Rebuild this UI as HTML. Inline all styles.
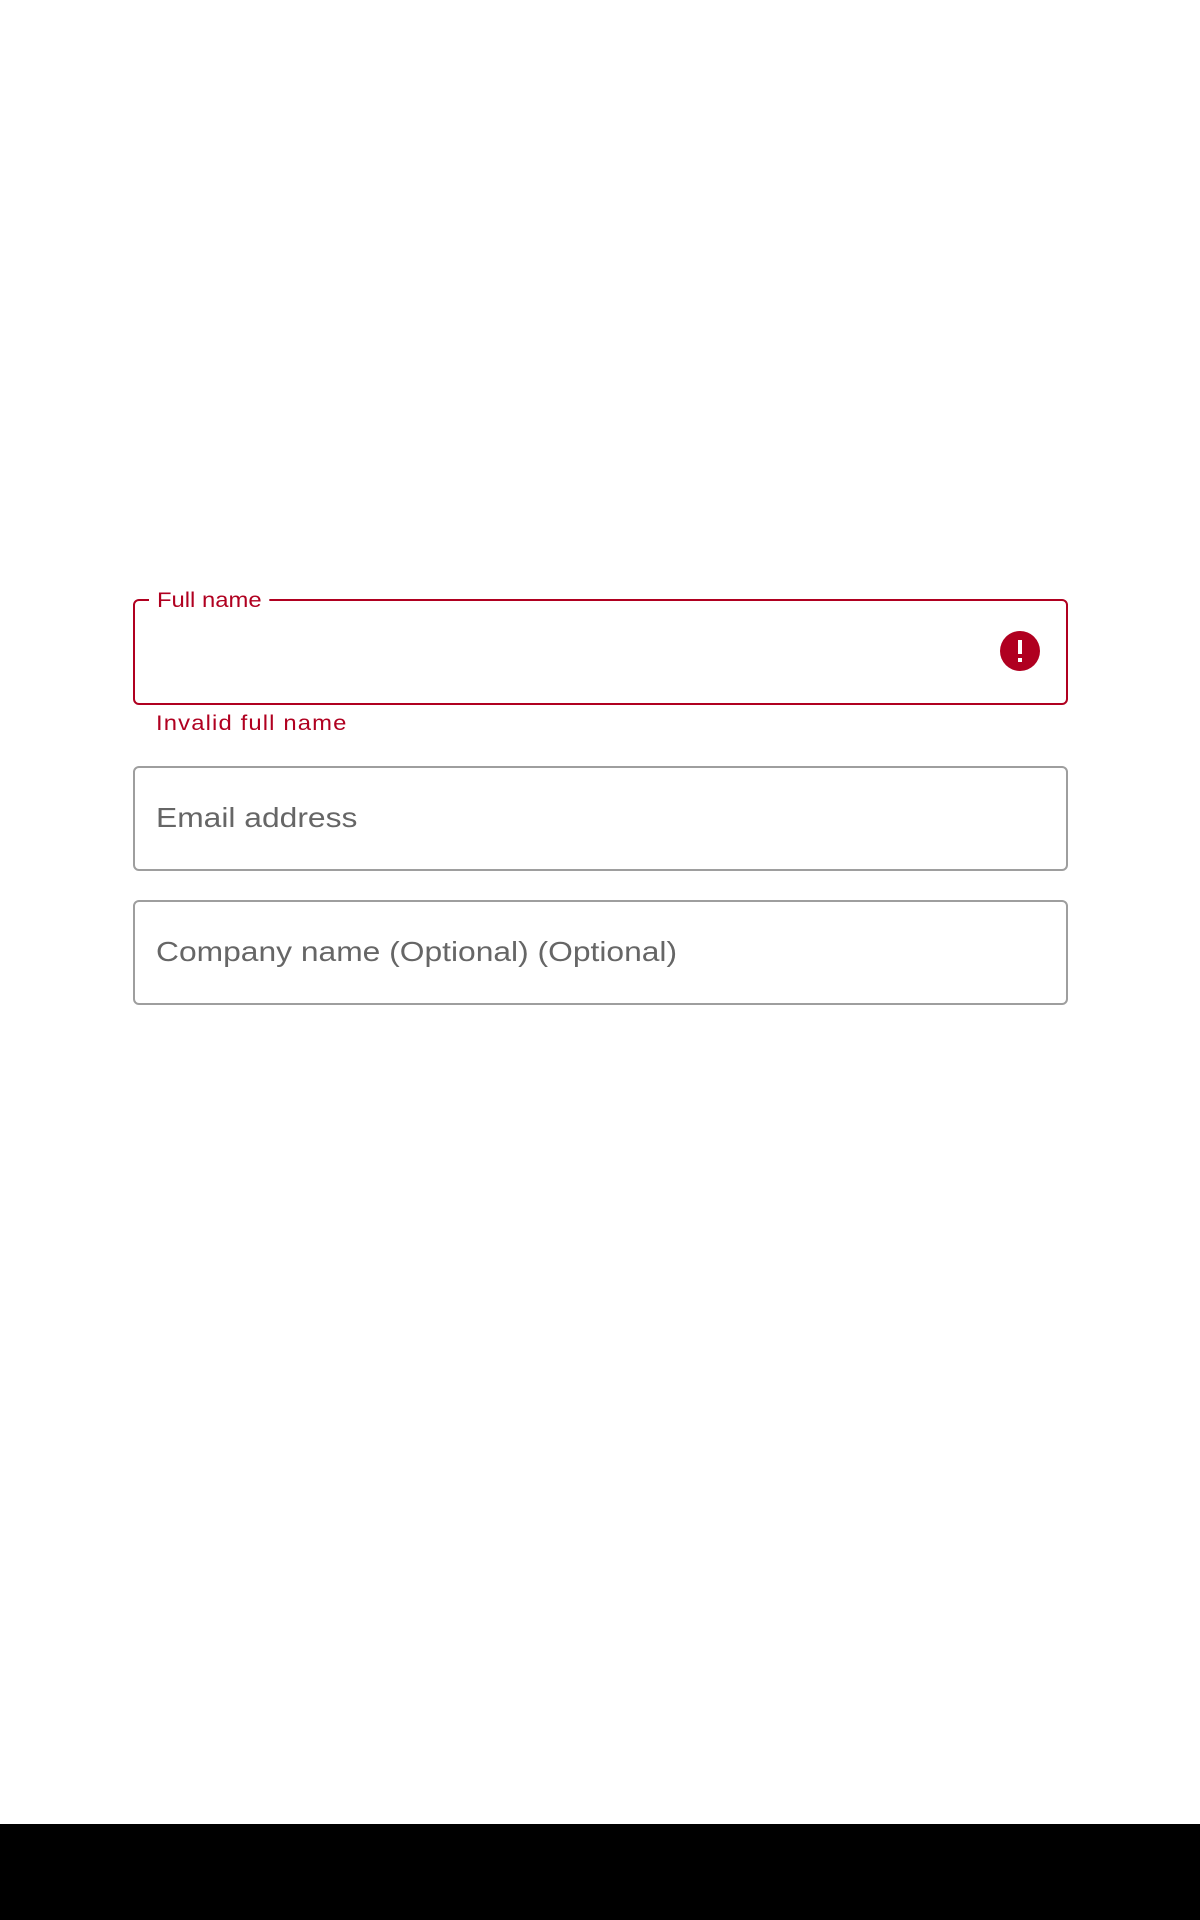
<!DOCTYPE html>
<html><head><style>
html,body{margin:0;padding:0;background:#fff;width:1200px;height:1920px;overflow:hidden;position:relative;font-family:"Liberation Sans",Roboto,sans-serif}
.box{position:absolute;left:133px;width:935px;height:103px;border:2px solid #9e9e9e;border-radius:6px;box-sizing:border-box}
.err{border-color:#b00020}
.ph{position:absolute;left:156px;font-size:28px;color:#666;line-height:1;transform:scaleX(1.135);transform-origin:0 0;white-space:nowrap}
.lbl{position:absolute;left:149px;top:588px;padding:0 7px;background:#fff;color:#b00020;font-size:21px;line-height:26px;transform:scaleX(1.135);transform-origin:0 0;white-space:nowrap}
.msg{position:absolute;left:156px;top:711px;color:#b00020;font-size:21px;letter-spacing:1px;line-height:26px;transform:scaleX(1.135);transform-origin:0 0;white-space:nowrap}
.icon{position:absolute;left:1000px;top:631px;width:40px;height:40px;border-radius:50%;background:#b00020}
.icon:before{content:"";position:absolute;left:18px;top:9px;width:4px;height:14px;background:#fff}
.icon:after{content:"";position:absolute;left:18px;top:27px;width:4px;height:4px;background:#fff}
.bar{position:absolute;left:0;top:1824px;width:1200px;height:96px;background:#000}
</style></head><body>
<div class="box err" style="top:599px;height:106px"></div>
<div class="lbl">Full name</div>
<div class="icon"></div>
<div class="msg">Invalid full name</div>
<div class="box" style="top:766px;height:105px"></div>
<div class="ph" style="top:804px">Email address</div>
<div class="box" style="top:900px;height:105px"></div>
<div class="ph" style="top:938px">Company name (Optional) (Optional)</div>
<div class="bar"></div>
</body></html>
